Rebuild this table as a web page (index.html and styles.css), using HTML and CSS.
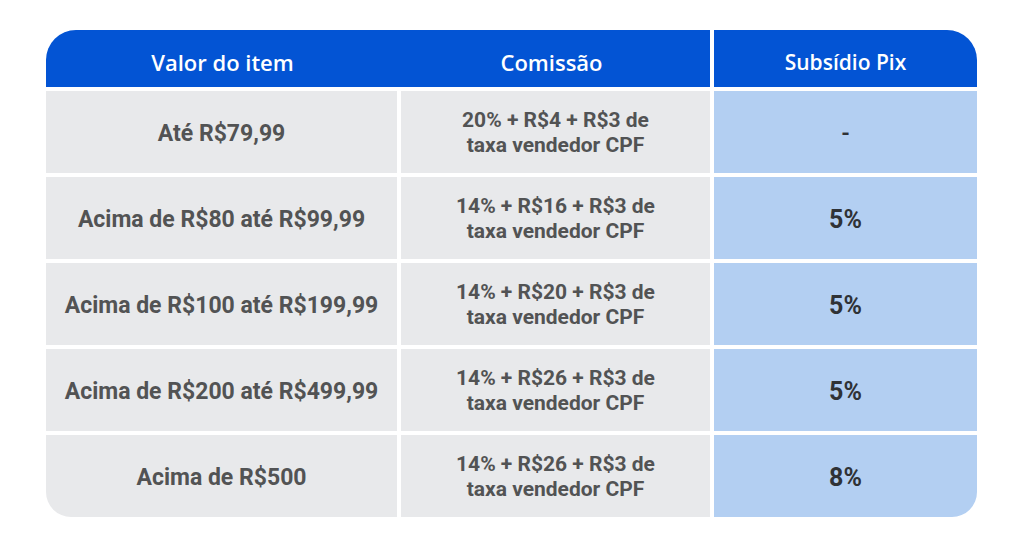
FILE: index.html
```html
<!DOCTYPE html>
<html lang="pt-BR">
<head>
<meta charset="utf-8">
<title>Comissões</title>
<link rel="stylesheet" href="styles.css">
</head>
<body>
<div class="page">
  <div class="table">
    <div class="hcell h1">Valor do item</div>
    <div class="hcell h2">Comissão</div>
    <div class="hcell h3">Subsídio Pix</div>

    <div class="cell c1">Até R$79,99</div>
    <div class="cell c2">20% + R$4 + R$3 de<br>taxa vendedor CPF</div>
    <div class="cell c3 dash">-</div>

    <div class="cell c1">Acima de R$80 até R$99,99</div>
    <div class="cell c2">14% + R$16 + R$3 de<br>taxa vendedor CPF</div>
    <div class="cell c3">5%</div>

    <div class="cell c1">Acima de R$100 até R$199,99</div>
    <div class="cell c2">14% + R$20 + R$3 de<br>taxa vendedor CPF</div>
    <div class="cell c3">5%</div>

    <div class="cell c1">Acima de R$200 até R$499,99</div>
    <div class="cell c2">14% + R$26 + R$3 de<br>taxa vendedor CPF</div>
    <div class="cell c3">5%</div>

    <div class="cell c1 bl">Acima de R$500</div>
    <div class="cell c2">14% + R$26 + R$3 de<br>taxa vendedor CPF</div>
    <div class="cell c3 br">8%</div>
  </div>
</div>
</body>
</html>
```

FILE: styles.css
```css
html, body {
  margin: 0;
  padding: 0;
  background: #ffffff;
}
.page {
  padding: 30px 0 0 46px;
}
.table {
  display: grid;
  grid-template-columns: 351px 309px 263px;
  grid-template-rows: 57px repeat(5, 82px);
  column-gap: 4px;
  row-gap: 4px;
  width: 931px;
}
.hcell {
  background: #0354d4;
  color: #ffffff;
  font-family: "Open Sans", "Liberation Sans", sans-serif;
  font-weight: 600;
  font-size: 22px;
  display: flex;
  align-items: center;
  justify-content: center;
  padding-top: 6px;
  box-sizing: border-box;
}
.h1 {
  border-top-left-radius: 30px;
  margin-right: -4px;
  padding-right: 2px;
}
.h2 {
  padding-right: 8px;
}
.h3 {
  border-top-right-radius: 30px;
  font-size: 21px;
}
.cell {
  display: flex;
  align-items: center;
  justify-content: center;
  text-align: center;
  font-family: Roboto, "Liberation Sans", sans-serif;
  font-weight: 700;
  color: #525354;
}
.c1 {
  background: #e8e9eb;
  font-size: 23px;
  padding-top: 3px;
  box-sizing: border-box;
}
.c2 {
  background: #e8e9eb;
  font-size: 21px;
  line-height: 25px;
  padding-top: 2px;
  box-sizing: border-box;
}
.c3 {
  background: #b3cff2;
  color: #2f3236;
  font-size: 25px;
  padding-top: 2px;
  box-sizing: border-box;
}
.dash {
  font-size: 22px;
}
.bl {
  border-bottom-left-radius: 25px;
}
.br {
  border-bottom-right-radius: 25px;
}
```
